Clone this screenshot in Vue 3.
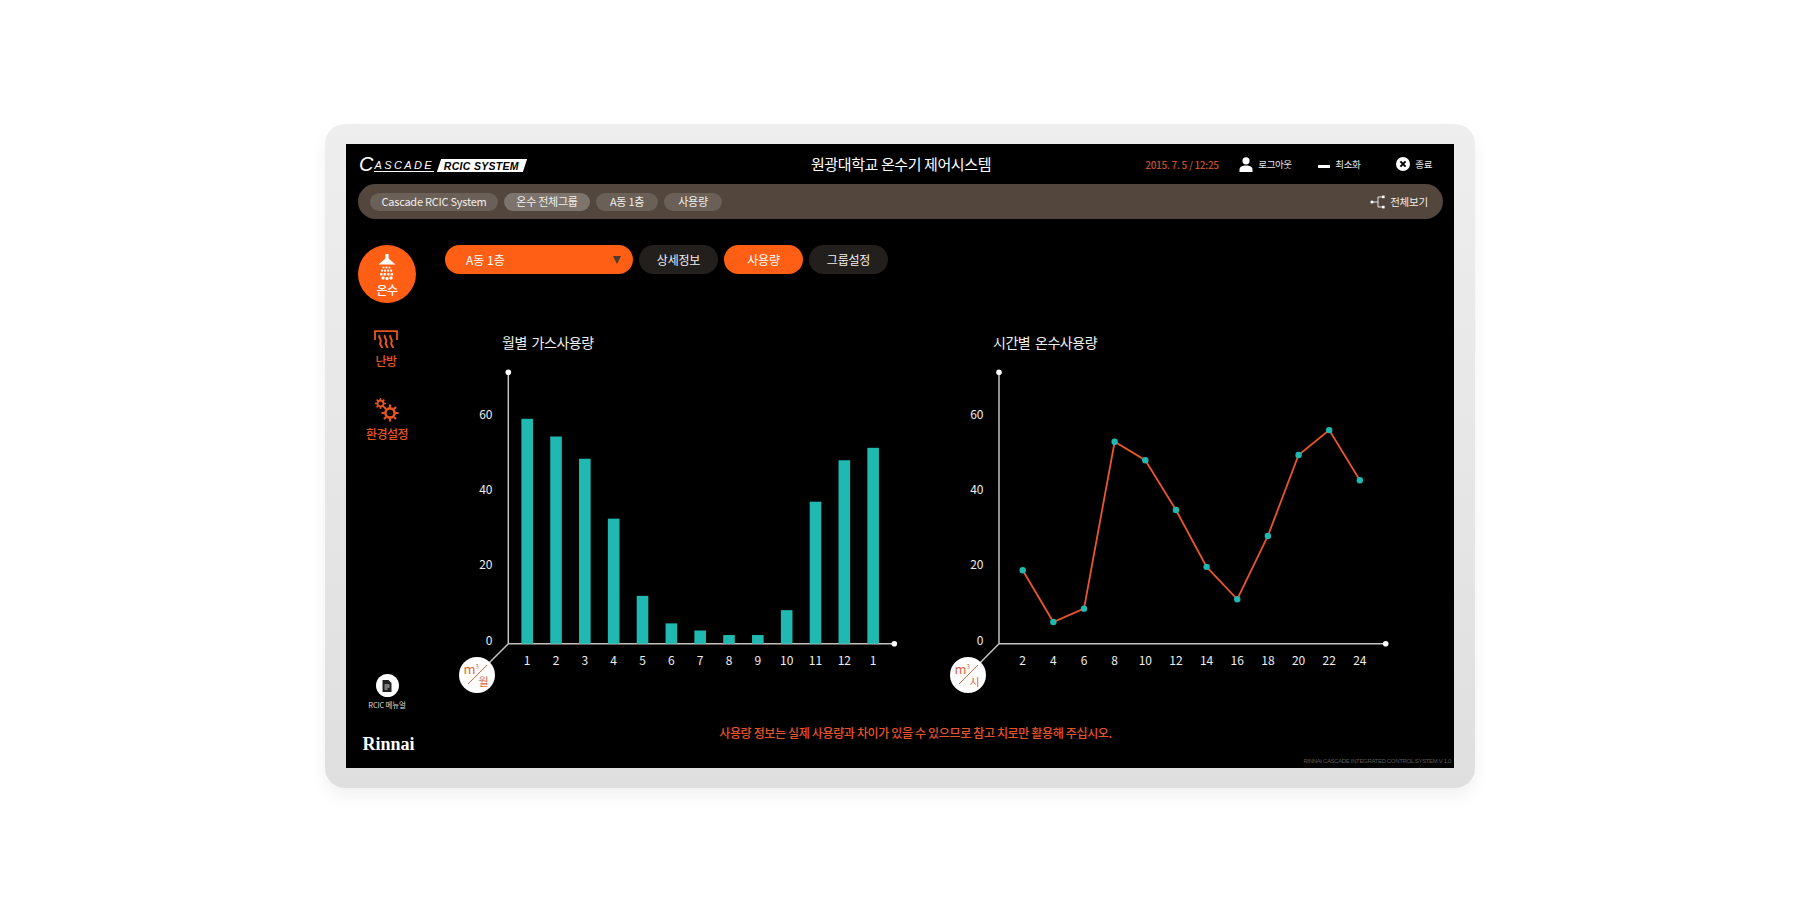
<template>
  <div class="page">
    <div class="device">
      <div class="screen">
        <header class="top">
          <div class="logo">
            <span class="logo-c">C</span>
            <span class="logo-name">ASCADE</span>
            <span class="logo-badge"><span>RCIC SYSTEM</span></span>
          </div>
          <h1 class="title">원광대학교 온수기 제어시스템</h1>
          <div class="top-right">
            <span class="date">2015. 7. 5 / 12:25</span>
            <span class="top-action logout">
              <svg width="14" height="15" viewBox="0 0 14 15"><circle cx="7" cy="3.8" r="3.6" fill="#fff" /><path d="M0.5 15v-2.6C0.5 10 3.5 8.6 7 8.6s6.5 1.4 6.5 3.8V15z" fill="#fff" /></svg>
              로그아웃
            </span>
            <span class="top-action minimize">
              <i class="minimize-bar"></i>
              최소화
            </span>
            <span class="top-action close">
              <svg width="14" height="14" viewBox="0 0 14 14"><circle cx="7" cy="7" r="7" fill="#fff" /><path d="M4.4 4.4l5.2 5.2M9.6 4.4l-5.2 5.2" stroke="#000" stroke-width="2" /></svg>
              종료
            </span>
          </div>
        </header>

        <nav class="crumbs">
          <div class="crumb-list">
            <span v-for="(c, i) in crumbs" :key="c.text" class="crumb" :class="{ 'crumb-on': i === 1 }" :style="{ width: c.width + 'px' }">{{ c.text }}</span>
          </div>
          <span class="view-all">
            <svg width="16" height="14" viewBox="0 0 16 14" fill="none">
              <path d="M2 7h6M12 2H8v10h4" stroke="#e8e4e0" stroke-width="1" />
              <circle cx="2" cy="7" r="1.6" fill="#fff" />
              <rect x="12" y="0.6" width="2.6" height="2.6" fill="#fff" />
              <rect x="12" y="10.8" width="2.6" height="2.6" fill="#fff" />
            </svg>
            전체보기
          </span>
        </nav>

        <div class="body">
          <aside class="side">
            <div class="side-item side-on">
              <svg width="22" height="27" viewBox="0 0 22 27">
                <path d="M9.4 0h3.2v4.5L19.5 10.6h-17L9.4 4.5z" fill="#fff" />
                <g fill="#fff">
                  <rect v-for="d in showerDrops" :key="d.x + '-' + d.y" :x="d.x" :y="d.y" :width="d.s" :height="d.s" rx="1" />
                </g>
              </svg>
              <span>온수</span>
            </div>
            <div class="side-item heat">
              <svg width="24" height="20" viewBox="0 0 24 20" fill="none" stroke="#e8561f">
                <path d="M1 10V1.2h22V10" stroke-width="1.8" />
                <path d="M5.5 5c-1.6 2.5 2.6 4.5 1 7s1.4 3.5 1.6 6M11 5c-1.6 2.5 2.6 4.5 1 7s1.4 3.5 1.6 6M16.5 5c-1.6 2.5 2.6 4.5 1 7s1.4 3.5 1.6 6" stroke-width="2" />
              </svg>
              <span>난방</span>
            </div>
            <div class="side-item gear">
              <svg width="24" height="24" viewBox="0 0 24 24" fill="none" stroke="#e8561f">
                <circle cx="5.5" cy="5.5" r="3" stroke-width="1.8" />
                <path d="M5.5 0v2M5.5 9v2M0 5.5h2M9 5.5h2M1.6 1.6L3 3M8 8l1.4 1.4M9.4 1.6L8 3M3 8L1.6 9.4" stroke-width="1.5" />
                <circle cx="15" cy="15" r="4.6" stroke-width="2.6" />
                <path d="M15 6.5v3M15 20.5v3M6.5 15h3M20.5 15h3M9 9l2 2M19 19l2 2M21 9l-2 2M11 19l-2 2" stroke-width="2.2" />
              </svg>
              <span>환경설정</span>
            </div>

            <div class="manual">
              <span class="manual-icon">
                <svg width="10" height="12" viewBox="0 0 10 12"><path d="M0.5 0H6.5L9.5 3V12H0.5z" fill="#222" /><path d="M2.5 5h5M2.5 7h5M2.5 9h3" stroke="#fff" stroke-width="0.8" /></svg>
              </span>
              <span class="manual-text">RCIC 메뉴얼</span>
            </div>
            <div class="brand">Rinnai</div>
          </aside>

          <main class="main">
            <div class="tabs">
              <div class="select">
                <span>A동 1층</span>
                <i class="select-arrow"></i>
              </div>
              <button v-for="t in tabs" :key="t" class="tab" :class="{ 'tab-on': t === '사용량' }">{{ t }}</button>
            </div>

            <div class="charts">
              <section class="chart chart-left">
                <h2 class="chart-title">월별 가스사용량</h2>
                <svg class="plot" width="460" height="336" viewBox="0 0 460 336">
                  <text v-for="t in yTicks" :key="t" class="tick" x="41.5" :y="tickY(t)" text-anchor="end">{{ t }}</text>
                  <path :d="axisPath(57.3, 443.3)" class="axis" />
                  <circle cx="57.3" cy="8.3" r="2.8" fill="#fff" />
                  <circle cx="443.3" :cy="Y0" r="2.8" fill="#fff" />
                  <rect v-for="(v, i) in monthly" :key="i" :x="barX(i) - 5.8" :y="valY(v)" width="11.6" :height="Y0 - valY(v)" fill="#20b9b1" />
                  <text v-for="(m, i) in months" :key="'m' + i" class="tick" :x="barX(i)" y="295.5" text-anchor="middle">{{ m }}</text>
                  <g transform="translate(26 311)">
                    <circle r="18" fill="#fff" />
                    <text class="unit" x="-13.5" y="-1">m<tspan class="unit-sup" dy="-5">3</tspan></text>
                    <path d="M-9 9L10 -10" stroke="#e2643c" stroke-width="1" />
                    <text class="unit unit-kr" x="1.5" y="10.5">월</text>
                  </g>
                </svg>
              </section>

              <section class="chart chart-right">
                <h2 class="chart-title">시간별 온수사용량</h2>
                <svg class="plot" width="460" height="336" viewBox="0 0 460 336">
                  <text v-for="t in yTicks" :key="t" class="tick" x="41.5" :y="tickY(t)" text-anchor="end">{{ t }}</text>
                  <path :d="axisPath(57, 443.7)" class="axis" />
                  <circle cx="57" cy="8.3" r="2.8" fill="#fff" />
                  <circle cx="443.7" :cy="Y0" r="2.8" fill="#fff" />
                  <polyline :points="linePoints" fill="none" stroke="#e8562a" stroke-width="1.8" />
                  <circle v-for="(v, i) in hourly" :key="i" :cx="lineX(i)" :cy="valY(v)" r="3.2" fill="#20b9b1" />
                  <text v-for="(h, i) in hours" :key="'h' + i" class="tick" :x="lineX(i)" y="295.5" text-anchor="middle">{{ h }}</text>
                  <g transform="translate(26 311)">
                    <circle r="18" fill="#fff" />
                    <text class="unit" x="-13.5" y="-1">m<tspan class="unit-sup" dy="-5">3</tspan></text>
                    <path d="M-9 9L10 -10" stroke="#e2643c" stroke-width="1" />
                    <text class="unit unit-kr" x="1.5" y="10.5">시</text>
                  </g>
                </svg>
              </section>
            </div>

            <p class="notice">사용량 정보는 실제 사용량과 차이가 있을 수 있으므로 참고 치로만 활용해 주십시오.</p>
            <p class="version">RINNAI CASCADE INTEGRATED CONTROL SYSTEM V 1.0</p>
          </main>
        </div>
      </div>
    </div>
  </div>
</template>

<script setup>
import { computed } from 'vue';

const crumbs = [
  { text: 'Cascade RCIC System', width: 128 },
  { text: '온수 전체그룹', width: 86 },
  { text: 'A동 1층', width: 62 },
  { text: '사용량', width: 58 }
];
const tabs = ['상세정보', '사용량', '그룹설정'];

// svg 안에서 0 기준선 y, 값 1당 픽셀
const Y0 = 279.7;
const UNIT = 3.767;
const yTicks = [60, 40, 20, 0];

const months = [1, 2, 3, 4, 5, 6, 7, 8, 9, 10, 11, 12, 1];
const monthly = [59.7, 55, 49.1, 33.2, 12.7, 5.4, 3.5, 2.3, 2.3, 8.9, 37.7, 48.7, 52];

const hours = [2, 4, 6, 8, 10, 12, 14, 16, 18, 20, 22, 24];
const hourly = [19.5, 5.75, 9.3, 53.6, 48.7, 35.5, 20.4, 11.8, 28.6, 50.1, 56.7, 43.4];

const valY = (v) => Y0 - v * UNIT;
const tickY = (t) => Y0 - t * UNIT - 4.5;
const barX = (i) => 76.2 + i * 28.83;
const lineX = (i) => 80.7 + i * 30.65;
const axisPath = (ox, xEnd) => `M${ox} 8.3V${Y0}H${xEnd}M${ox} ${Y0}L26 311`;

const linePoints = computed(() => hourly.map((v, i) => `${lineX(i)},${valY(v)}`).join(' '));

const showerDrops = [
  { x: 6.5, y: 12.5, s: 2 }, { x: 9.5, y: 12.5, s: 2 }, { x: 12.5, y: 12.5, s: 2 },
  { x: 5, y: 15.5, s: 2.2 }, { x: 8, y: 15.5, s: 2.2 }, { x: 11, y: 15.5, s: 2.2 }, { x: 14, y: 15.5, s: 2.2 },
  { x: 4, y: 19, s: 2.6 }, { x: 7.5, y: 19, s: 2.6 }, { x: 11, y: 19, s: 2.6 }, { x: 14.5, y: 19, s: 2.6 },
  { x: 5.5, y: 22.5, s: 3 }, { x: 9.5, y: 23, s: 3 }, { x: 13.5, y: 22.5, s: 3 }
];
</script>

<style>
body {
  margin: 0;
  background: #fff;
}
</style>

<style scoped>
.page {
  height: 900px;
  box-sizing: border-box;
  padding-top: 124px;
  display: flex;
  justify-content: center;
  overflow: hidden;
  font-family: "Noto Sans CJK KR", "Noto Sans", sans-serif;
}

.device {
  width: 1150px;
  height: 664px;
  box-sizing: border-box;
  padding: 20px 21px;
  border-radius: 20px;
  background: linear-gradient(#eeeeee, #dfdfdf);
  box-shadow: 0 8px 16px rgba(0, 0, 0, 0.06);
}

.screen {
  height: 624px;
  background: #000;
  display: flex;
  flex-direction: column;
  color: #fff;
}

.top {
  height: 40px;
  padding: 0 22px 0 13px;
  display: flex;
  align-items: center;
  position: relative;
}

.logo {
  display: flex;
  align-items: flex-end;
  height: 14px;
  font-family: "Liberation Sans", sans-serif;
  font-style: italic;
  color: #fff;
  margin-top: 1px;
}

.logo-c {
  font-size: 20px;
  line-height: 15px;
  margin-right: 1px;
}

.logo-name {
  font-size: 11px;
  line-height: 12px;
  letter-spacing: 2.4px;
  border-bottom: 1px solid #fff;
  margin-right: 5px;
}

.logo-badge {
  height: 13px;
  width: 86px;
  background: #fff;
  color: #000;
  transform: skewX(-18deg);
  display: flex;
  align-items: center;
  justify-content: center;
}

.logo-badge span {
  font-size: 10.5px;
  font-weight: 700;
  font-style: italic;
  letter-spacing: 0.3px;
  transform: skewX(18deg);
  white-space: nowrap;
}

.title {
  position: absolute;
  left: 0;
  right: 0;
  top: 9px;
  margin: 0;
  padding-left: 2px;
  text-align: center;
  font-size: 15px;
  line-height: 22px;
  font-weight: 400;
  letter-spacing: -0.4px;
  pointer-events: none;
}

.top-right {
  margin-left: auto;
  display: flex;
  align-items: center;
  font-size: 9.5px;
}

.date {
  color: #c9502c;
  font-size: 10px;
  font-weight: 500;
  width: 94px;
  letter-spacing: -0.3px;
}

.top-action {
  display: flex;
  align-items: center;
  gap: 5px;
  letter-spacing: -0.4px;
  color: #e8e8e8;
}

.logout {
  width: 79px;
}

.minimize {
  width: 78px;
}

.minimize-bar {
  display: block;
  width: 12px;
  height: 2.5px;
  background: #fff;
  margin-top: 5px;
}

.crumbs {
  height: 35px;
  margin: 0 11px 0 12px;
  padding: 0 15px 0 12px;
  border-radius: 18px;
  background: #52463d;
  display: flex;
  align-items: center;
  justify-content: space-between;
  flex-shrink: 0;
}

.crumb-list {
  display: flex;
  gap: 6px;
}

.crumb {
  height: 18px;
  line-height: 17px;
  border-radius: 9px;
  background: #6a6058;
  text-align: center;
  font-size: 11px;
  letter-spacing: -0.25px;
  color: #f2efec;
}

.crumb-on {
  background: #7d746d;
}

.view-all {
  display: flex;
  align-items: center;
  gap: 4px;
  font-size: 10.5px;
  letter-spacing: -0.2px;
  color: #f2efec;
}

.body {
  flex: 1;
  display: flex;
  min-height: 0;
}

.side {
  width: 99px;
  box-sizing: border-box;
  padding: 26px 29px 14px 12px;
  display: flex;
  flex-direction: column;
  align-items: center;
  flex-shrink: 0;
}

.side-item {
  display: flex;
  flex-direction: column;
  align-items: center;
  font-size: 12px;
  line-height: 16px;
  font-weight: 500;
  color: #e8561f;
  letter-spacing: -0.5px;
  white-space: nowrap;
}

.side-on {
  width: 58px;
  height: 58px;
  border-radius: 50%;
  background: #ff5f14;
  color: #fff;
  padding-top: 9px;
  box-sizing: border-box;
  gap: 1px;
}

.heat {
  margin-top: 27px;
  gap: 3px;
  margin-left: -2px;
}

.gear {
  margin-top: 29px;
  gap: 4px;
}

.manual {
  margin-top: auto;
  display: flex;
  flex-direction: column;
  align-items: center;
  gap: 3px;
}

.manual-icon {
  width: 23px;
  height: 23px;
  border-radius: 50%;
  background: #fff;
  display: flex;
  align-items: center;
  justify-content: center;
}

.manual-text {
  font-size: 7.5px;
  line-height: 10px;
  letter-spacing: -0.2px;
  color: #ddd;
  white-space: nowrap;
}

.brand {
  margin-top: 24px;
  margin-left: 3px;
  font-family: "Liberation Serif", serif;
  font-weight: 700;
  font-size: 18px;
  line-height: 20px;
  color: #fff;
}

.main {
  flex: 1;
  min-width: 0;
  padding-top: 26px;
  display: flex;
  flex-direction: column;
}

.tabs {
  display: flex;
  gap: 6px;
}

.select {
  width: 188px;
  height: 29px;
  box-sizing: border-box;
  border-radius: 15px;
  background: #ff5f14;
  padding: 0 12px 0 21px;
  display: flex;
  align-items: center;
  justify-content: space-between;
  font-size: 12px;
  color: #fff;
}

.select-arrow {
  width: 0;
  height: 0;
  border-left: 4.5px solid transparent;
  border-right: 4.5px solid transparent;
  border-top: 8px solid #4a3a30;
}

.tab {
  width: 79px;
  height: 29px;
  border: 0;
  border-radius: 15px;
  background: #231f1c;
  color: #f0f0f0;
  font-family: inherit;
  font-size: 12px;
  letter-spacing: -0.2px;
  padding: 0;
}

.tab-on {
  background: #ff5f14;
  color: #fff;
}

.charts {
  display: flex;
  margin-left: 6px;
  margin-top: 56px;
}

.chart-left {
  width: 491px;
}

.chart-right {
  width: 460px;
}

.chart-title {
  margin: 0;
  height: 34px;
  padding-left: 51px;
  font-size: 14px;
  line-height: 24px;
  font-weight: 400;
  letter-spacing: -0.45px;
  word-spacing: 2px;
  color: #f0f0f0;
}

.plot {
  display: block;
}

.tick {
  font-size: 12px;
  fill: #eee;
  dominant-baseline: central;
}

.axis {
  fill: none;
  stroke: #c4c1bf;
  stroke-width: 1.5;
}

.unit {
  font-size: 13px;
  fill: #e2643c;
}

.unit-sup {
  font-size: 6px;
}

.unit-kr {
  font-size: 11px;
}

.notice {
  margin: 24px 0 0;
  padding-right: 68px;
  text-align: center;
  font-size: 12px;
  line-height: 18px;
  font-weight: 500;
  color: #e8542a;
  letter-spacing: -0.35px;
}

.version {
  margin: 15px 3px 0 0;
  text-align: right;
  font-family: "Liberation Sans", sans-serif;
  font-size: 6px;
  line-height: 8px;
  letter-spacing: -0.35px;
  color: #5a5a5a;
}
</style>
